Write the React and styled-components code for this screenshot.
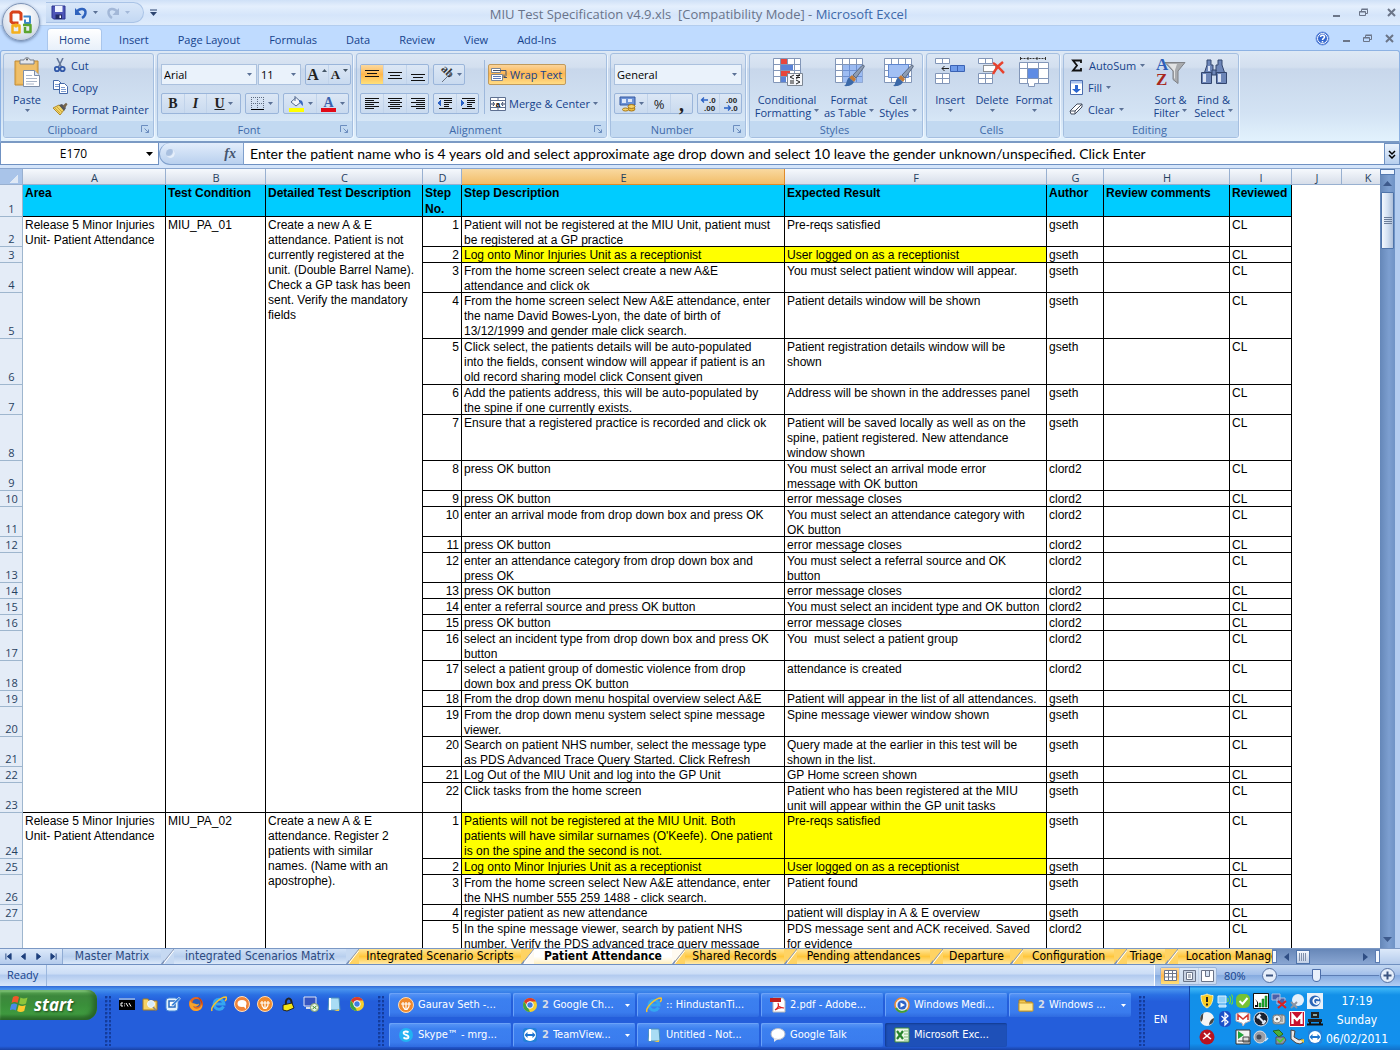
import React, {useState} from "react";
import styled, {createGlobalStyle} from "styled-components"

    const GlobalStyle = createGlobalStyle`
    * {
        box-sizing: border-box;
    }
    body {
        margin: 0;
        overflow: hidden;
        font-family: "Open Sans", "Noto Sans", sans-serif;
        font-size: 11px;
        color: #15428b;
    }
    button, input, select {
        font: inherit;
        color: inherit;
        margin: 0;
        padding: 0;
        border: none;
        background: none;
    }
    button {
        cursor: pointer;
    }
    svg {
        display: block;
        flex: none;
    }
    `
    const Desktop = styled.div`
    display: flex;
    flex-direction: column;
    height: 100vh;
    background: #bfdbff;
    `
    const TitleBar = styled.header`
    display: flex;
    position: relative;
    align-items: center;
    height: 26px;
    padding-left: 46px;
    background: linear-gradient(#cfe0f7, #e4effd 25%, #d5e5fa 60%, #dfecfc);
    border-bottom: 1px solid #b3cdee;
    `
    const OfficeButton = styled.button`
    position: absolute;
    left: 2px;
    top: 3px;
    z-index: 2;
    width: 38px;
    height: 38px;
    border-radius: 50%;
    display: flex;
    align-items: center;
    justify-content: center;
    background: radial-gradient(circle at 50% 35%, #ffffff 20%, #dde4ee 60%, #b4c2d6);
    border: 1px solid #7d93b5;
    box-shadow: 0 1px 3px #6c86ad;
    `
    const QuickAccess = styled.div`
    display: flex;
    align-items: center;
    height: 21px;
    width: 98px;
    padding-left: 5px;
    gap: 8px;
    border: 1px solid #a9c3e6;
    border-left: none;
    border-radius: 0 11px 11px 0;
    background: linear-gradient(#d9e7f9, #c3d8f3);
    `
    const IconButton = styled.button`
    display: flex;
    align-items: center;
    justify-content: center;
    gap: 5px;
    `
    const CustomizeButton = styled(IconButton)`
    margin-left: 6px;
    `
    const Title = styled.h1`
    flex: 1;
    margin: 0;
    padding: 2px 92px 0 0;
    text-align: center;
    font-size: 13px;
    font-weight: 400;
    line-height: 18px;
    white-space: pre;
    color: #69748a;
    span {
        color: #3e6aaa;
    }
    `
    const WindowButtons = styled.div`
    display: flex;
    align-items: center;
    align-self: center;
    gap: ${props => props.$gap}px;
    padding-right: ${props => props.$right}px;
    `
    const MenuTabs = styled.nav`
    display: flex;
    align-items: flex-end;
    gap: 7px;
    height: 24px;
    padding-left: 48px;
    background: #bfdbff;
    `
    const MenuTab = styled.button`
    height: 21px;
    padding: 0 11px;
    line-height: 20px;
    border-radius: 3px 3px 0 0;
    background: ${props => props.$active ? "linear-gradient(#ffffff, #e8f0fa)" : "none"};
    box-shadow: ${props => props.$active ? "0 0 0 1px #a9c6ec" : "none"};
    `
    const Spacer = styled.div`
    flex: 1;
    `
    const Ribbon = styled.section`
    position: relative;
    display: flex;
    gap: 3px;
    height: 93px;
    padding: 2px 2px 5px;
    border: 1px solid #8db2e3;
    border-bottom: 2px solid #7b9ac4;
    border-radius: 3px 3px 0 0;
    background: linear-gradient(#dde8f5, #d3dfef 18%, #c8d7eb 20%, #d3e3f4 70%, #e2f2fd);
    `
    const Group = styled.section`
    display: flex;
    flex-direction: column;
    width: ${props => props.$w}px;
    height: 85px;
    border: 1px solid #a5bfe0;
    border-radius: 3px;
    box-shadow: 1px 1px 0 #eef6ff;
    overflow: hidden;
    `
    const GroupBody = styled.div`
    display: flex;
    flex: 1;
    padding: 0 ${props => props.$pad || 1}px;
    `
    const GroupTitle = styled.div`
    display: flex;
    align-items: center;
    height: 16px;
    padding-right: 3px;
    background: #c2d9f1;
    color: #3e6aaa;
    h2 {
        flex: 1;
        margin: 0;
        text-align: center;
        font: inherit;
        line-height: 15px;
    }
    `
    const BigButton = styled.button`
    display: flex;
    flex-direction: column;
    align-items: center;
    justify-content: flex-start;
    width: ${props => props.$w}px;
    padding-top: 3px;
    line-height: 13px;
    white-space: nowrap;
    svg:first-child {
        margin-bottom: 4px;
    }
    `
    const LabelLine = styled.span`
    display: flex;
    align-items: center;
    gap: 3px;
    height: 13px;
    `
    const SmallColumn = styled.div`
    display: flex;
    flex-direction: column;
    padding-left: 4px;
    width: ${props => props.$w}px;
    `
    const SmallButton = styled.button`
    display: flex;
    align-items: center;
    gap: 4px;
    height: 22px;
    white-space: nowrap;
    `
    const ToolRows = styled.div`
    display: flex;
    flex-direction: column;
    align-items: flex-start;
    gap: 8px;
    padding-top: 10px;
    `
    const ToolRow = styled.div`
    display: flex;
    align-items: center;
    gap: ${props => props.$gap || 4}px;
    height: 21px;
    `
    const ButtonSet = styled.div`
    display: flex;
    height: 21px;
    border: 1px solid #9ab5da;
    border-radius: 2px;
    background: linear-gradient(#dce7f5, #c9daef);
    `
    const SizeButtons = styled(ButtonSet)`
    margin-left: 3px;
    `
    const SetButton = styled.button`
    display: flex;
    align-items: center;
    justify-content: center;
    gap: 3px;
    width: ${props => props.$w || 22}px;
    color: #222;
    font: ${props => props.$font || "inherit"};
    background: ${props => props.$on ? "linear-gradient(#fbd9a0, #ffb74c 50%, #ffe07a)" : "none"};
    & + & {
        border-left: 1px solid #c1d3ea;
    }
    `
    const ComboBox = styled.label`
    display: flex;
    align-items: center;
    width: ${props => props.$w}px;
    height: 21px;
    border: 1px solid #abc1de;
    background: #eaf2fb;
    padding-right: 4px;
    select {
        flex: 1;
        min-width: 0;
        appearance: none;
        padding-left: 2px;
        color: #000;
        outline: none;
    }
    `
    const Divider = styled.div`
    width: 1px;
    height: 54px;
    margin: 6px 3px 0 5px;
    background: #9db8dc;
    `
    const WrapButton = styled(SmallButton)`
    height: 21px;
    gap: 3px;
    padding: 0 3px 0 1px;
    border: 1px solid ${props => props.$on ? "#c09a5c" : "transparent"};
    border-radius: 2px;
    background: ${props => props.$on ? "linear-gradient(#fbd49a, #fdb653 45%, #ffdc85)" : "none"};
    `
    const FormulaBar = styled.div`
    display: flex;
    height: 25px;
    padding-bottom: 3px;
    background: #d5e5fa;
    color: #000;
    `
    const NameBox = styled.div`
    display: flex;
    align-items: center;
    width: 159px;
    background: #fff;
    border: 1px solid #6f91c2;
    border-top: none;
    font-size: 12px;
    input {
        width: 145px;
        padding-left: 0;
        text-align: center;
        outline: none;
    }
    `
    const FunctionArea = styled.div`
    display: flex;
    align-items: center;
    justify-content: space-between;
    width: 85px;
    padding: 0 7px 0 6px;
    border: 1px solid #7f9fcc;
    border-width: 0 1px 1px;
    border-radius: 11px 0 0 11px;
    background: linear-gradient(#e2edfb, #b9d0ee);
    `
    const FunctionButton = styled.button`
    font: italic bold 14px "Liberation Serif", serif;
    color: #44546e;
    `
    const Knob = styled.span`
    width: 9px;
    height: 9px;
    border-radius: 50%;
    background: #a9c0e0;
    box-shadow: inset -2px -2px 1px #e6effb;
    `
    const FormulaInput = styled.input`
    flex: 1;
    min-width: 0;
    padding-left: 6px;
    background: #fff;
    border-bottom: 1px solid #6f91c2;
    outline: none;
    font: 14px Lato, sans-serif;
    `
    const ExpandButton = styled(IconButton)`
    width: 16px;
    border: 1px solid #6f91c2;
    background: linear-gradient(#eaf2fc, #b7cfee);
    `
    const SheetArea = styled.main`
    display: flex;
    flex: 1;
    min-height: 0;
    border-top: 1px solid #8ba7cf;
    background: #fff;
    `
    const GridWindow = styled.div`
    flex: 1;
    min-width: 0;
    overflow: hidden;
    `
    const Grid = styled.table`
    width: 100%;
    table-layout: fixed;
    border-collapse: separate;
    border-spacing: 0;
    font: 12px/15px "Liberation Sans", Arial, sans-serif;
    color: #000;
    `
    const ColumnHead = styled.th`
    height: 16px;
    padding: 0;
    font: 11px/15px "Open Sans", sans-serif;
    color: #27415f;
    background: ${props => props.$on ? "linear-gradient(#f9d9a0, #f1bb64)" : "linear-gradient(#f6f9fd, #d5dce8)"};
    box-shadow: inset -1px -1px 0 ${props => props.$on ? "#e08a2a" : "#98b0d0"};
    `
    const Corner = styled(ColumnHead)`
    background: linear-gradient(135deg, transparent 60%, #dfe9f6 60%) 6px 4px / 12px 10px no-repeat #a9c4e9;
    `
    const GridRow = styled.tr`
    height: ${props => props.$h}px;
    `
    const RowHead = styled.th`
    padding: 0;
    vertical-align: bottom;
    font: 11px/16px "Open Sans", sans-serif;
    color: #27415f;
    background: #e4ecf7;
    box-shadow: inset -1px -1px 0 #9eb6ce;
    `
    const Cell = styled.td`
    padding: 1px ${props => props.$right ? 3 : 1}px 0 2px;
    vertical-align: top;
    white-space: pre;
    overflow: hidden;
    text-align: ${props => props.$right ? "right" : "left"};
    background: ${props => props.$yellow ? "#ffff00" : "#ffffff"};
    box-shadow: inset -1px -1px 0 #000;
    &::after {
        content: "";
        display: block;
        margin-bottom: -1px;
    }
    `
    const TitleCell = styled.th`
    padding: 0 0 0 2px;
    vertical-align: top;
    text-align: left;
    line-height: 16px;
    white-space: pre;
    background: #00ccff;
    box-shadow: inset -1px -1px 0 #000;
    `
    const EmptyCell = styled.td`
    padding: 0;
    `
    const VerticalScroll = styled.div`
    display: flex;
    flex-direction: column;
    align-items: center;
    width: 15px;
    margin-right: 5px;
    background: linear-gradient(90deg, #6587b8, #7d9fd0 60%, #6f93c6);
    box-shadow: 5px 0 0 #b4cdf0;
    `
    const SplitBox = styled.div`
    width: 15px;
    height: 6px;
    border: 1px solid #5479b0;
    background: #eef5ff;
    `
    const ScrollButton = styled(IconButton)`
    width: 15px;
    height: 17px;
    `
    const VerticalThumb = styled(IconButton)`
    width: 13px;
    height: 57px;
    border: 1px solid #4f74aa;
    border-radius: 1px;
    background: linear-gradient(90deg, #f4f8fe, #d4e1f2 50%, #aebfd9);
    `
    const SheetTabs = styled.div`
    display: flex;
    height: 17px;
    background: linear-gradient(#dce9fa, #b4cbec);
    border-top: 1px solid #7b98c4;
    border-bottom: 1px solid #6f8fc0;
    font: 12px/15px "DejaVu Sans Condensed", "DejaVu Sans", sans-serif;
    color: #000;
    `
    const TabArrows = styled.div`
    display: flex;
    align-items: center;
    gap: 8px;
    width: 63px;
    padding-left: 5px;
    border-right: 1px solid #8fabd3;
    `
    const TabList = styled.div`
    display: flex;
    flex: 1;
    min-width: 0;
    overflow: hidden;
    `
    const SheetTab = styled.button`
    flex: none;
    width: ${props => props.$w}px;
    white-space: nowrap;
    font-weight: ${props => props.$kind === "active" ? 700 : 400};
    color: ${props => props.$kind === "plain" ? "#2c4a80" : "#000"};
    background: ${props => props.$kind === "active" ? "linear-gradient(#ffffff 50%, #fff0c0)"
        : props.$kind === "plain" ? "linear-gradient(#d2e2f7, #b8cfee 50%, #dbe8f9)"
        : "linear-gradient(#ffe69a, #ffc73c 50%, #ffe9a8)"};
    `
    const SideScroll = styled.div`
    display: flex;
    align-items: center;
    width: 108px;
    margin-right: 20px;
    background: linear-gradient(#6787b8, #89a6d2);
    `
    const SplitHandle = styled.span`
    width: 5px;
    height: 13px;
    border: 1px solid #5c7db2;
    background: #f5f9ff;
    `
    const SideButton = styled(IconButton)`
    width: 19px;
    `
    const SideThumb = styled(IconButton)`
    width: 14px;
    height: 14px;
    border: 1px solid #4f74aa;
    background: linear-gradient(#f4f8fe, #c2d0e6);
    `
    const StatusBar = styled.footer`
    display: flex;
    height: 21px;
    align-items: stretch;
    background: linear-gradient(#dce9fa, #cddef6 40%, #b3cbef 50%, #d9e7fa);
    line-height: 20px;
    `
    const StatusText = styled.div`
    width: 47px;
    padding-left: 7px;
    border-right: 1px solid #9bb7de;
    `
    const StatusTools = styled.div`
    display: flex;
    align-items: center;
    width: 246px;
    padding: 0 4px 0 5px;
    gap: 7px;
    border-left: 1px solid #fff;
    background: linear-gradient(#c3d7f1, #a3c0ea 45%, #86abe0 50%, #b2cef3);
    `
    const ViewButtons = styled(ButtonSet)`
    height: 18px;
    `
    const ZoomControl = styled.label`
    display: flex;
    align-items: center;
    input {
        width: 101px;
        height: 16px;
        appearance: none;
        background: linear-gradient(#5c7db4, #5c7db4) center / 100% 1px no-repeat;
    }
    input::-webkit-slider-thumb {
        appearance: none;
        width: 9px;
        height: 13px;
        border: 1px solid #4b6da8;
        border-radius: 1px 1px 5px 5px;
        background: #e8f0fb;
    }
    `
    const TaskBar = styled.footer`
    display: flex;
    height: 64px;
    background: linear-gradient(#3168d5, #4893ee 5%, #2a6fe3 14%, #245edb 24%, #245edb 94%, #1941a5);
    color: #fff;
    font: 11px/14px "DejaVu Sans Condensed", "DejaVu Sans", sans-serif;
    `
    const StartButton = styled.button`
    display: flex;
    align-items: center;
    gap: 4px;
    width: 97px;
    height: 30px;
    margin-top: 4px;
    padding: 0 0 2px 10px;
    border-radius: 0 9px 12px 0;
    background: linear-gradient(#5eac56, #3c873c 20%, #3a8f3a 50%, #3f9a3f 80%, #2d6f2d);
    box-shadow: inset -4px -2px 5px #276327, inset 0 2px 2px #86c97d;
    font: italic bold 17px "Open Sans", sans-serif;
    text-shadow: 1px 1px 2px #1c4a1c;
    `
    const Grip = styled.div`
    width: 6px;
    height: 50px;
    margin: 10px ${props => props.$right}px 0 ${props => props.$left}px;
    background: radial-gradient(circle at 1px 1px, #143c9c 1px, transparent 2px) 0 0 / 4px 4px;
    `
    const QuickLaunch = styled.div`
    display: flex;
    align-items: flex-start;
    gap: 7px;
    width: 260px;
    padding: 10px 0 0 7px;
    `
    const TaskGrid = styled.div`
    display: grid;
    flex: 1;
    grid-template-columns: repeat(6, 1fr);
    grid-auto-rows: 24px;
    gap: 6px 2px;
    padding-top: 7px;
    `
    const TaskButton = styled.button`
    display: flex;
    align-items: center;
    gap: 4px;
    min-width: 0;
    padding: 0 5px 0 9px;
    border-radius: 2px;
    white-space: nowrap;
    text-align: left;
    background: ${props => props.$on ? "#1e50b8" : "linear-gradient(#5a97f6, #3c80f0 25%, #3a7cee 80%, #2f6be0)"};
    box-shadow: ${props => props.$on ? "inset 1px 1px 2px #123a8f" : "inset 1px 1px 0 #6ba2f8"};
    b {
        color: #d8dde6;
    }
    `
    const TaskName = styled.span`
    flex: 1;
    overflow: hidden;
    `
    const Language = styled.button`
    width: 15px;
    margin: 4px 21px 0 8px;
    `
    const Tray = styled.div`
    display: flex;
    width: 211px;
    padding-left: 8px;
    border-left: 1px solid #1248a8;
    background: linear-gradient(#1070d0, #3bb4f6 4%, #1290e8 14%, #1290ee 90%, #1270c8);
    `
    const TrayIcons = styled.div`
    display: grid;
    grid-template-columns: repeat(7, 18px);
    grid-auto-rows: 18px;
    padding-top: 6px;
    justify-items: center;
    align-items: center;
    `
    const Clock = styled.time`
    flex: 1;
    padding: 6px 10px 0 0;
    text-align: center;
    font-size: 12px;
    line-height: 19px;
    white-space: pre;
    `

    const columns = [
        {name: "A", width: 143}, {name: "B", width: 100}, {name: "C", width: 157},
        {name: "D", width: 39}, {name: "E", width: 323}, {name: "F", width: 262},
        {name: "G", width: 57}, {name: "H", width: 126}, {name: "I", width: 62},
        {name: "J", width: 50}, {name: "K", width: 52}
    ]
    const titles = ["Area", "Test Condition", "Detailed Test Description", "Step\nNo.", "Step Description",
        "Expected Result", "Author", "Review comments", "Reviewed"]
    const tests = [
        {
            area: "Release 5 Minor Injuries\nUnit- Patient Attendance",
            condition: "MIU_PA_01",
            detail: "Create a new A & E\nattendance. Patient is not\ncurrently registered at the\nunit. (Double Barrel Name).\nCheck a GP task has been\nsent. Verify the mandatory\nfields",
            steps: [
                {h: 30, step: "Patient will not be registered at the MIU Unit, patient must\nbe registered at a GP practice", result: "Pre-reqs satisfied", author: "gseth"},
                {h: 16, step: "Log onto Minor Injuries Unit as a receptionist", result: "User logged on as a receptionist", author: "gseth", yellow: true},
                {h: 30, step: "From the home screen select create a new A&E\nattendance and click ok", result: "You must select patient window will appear.", author: "gseth"},
                {h: 46, step: "From the home screen select New A&E attendance, enter\nthe name David Bowes-Lyon, the date of birth of\n13/12/1999 and gender male click search.", result: "Patient details window will be shown", author: "gseth"},
                {h: 46, step: "Click select, the patients details will be auto-populated\ninto the fields, consent window will appear if patient is an\nold record sharing model click Consent given", result: "Patient registration details window will be\nshown", author: "gseth"},
                {h: 30, step: "Add the patients address, this will be auto-populated by\nthe spine if one currently exists.", result: "Address will be shown in the addresses panel", author: "gseth"},
                {h: 46, step: "Ensure that a registered practice is recorded and click ok", result: "Patient will be saved locally as well as on the\nspine, patient registered. New attendance\nwindow shown", author: "gseth"},
                {h: 30, step: "press OK button", result: "You must select an arrival mode error\nmessage with OK button", author: "clord2"},
                {h: 16, step: "press OK button", result: "error message closes", author: "clord2"},
                {h: 30, step: "enter an arrival mode from drop down box and press OK", result: "You must select an attendance category with\nOK button", author: "clord2"},
                {h: 16, step: "press OK button", result: "error message closes", author: "clord2"},
                {h: 30, step: "enter an attendance category from drop down box and\npress OK", result: "You must select a referral source and OK\nbutton", author: "clord2"},
                {h: 16, step: "press OK button", result: "error message closes", author: "clord2"},
                {h: 16, step: "enter a referral source and press OK button", result: "You must select an incident type and OK button", author: "clord2"},
                {h: 16, step: "press OK button", result: "error message closes", author: "clord2"},
                {h: 30, step: "select an incident type from drop down box and press OK\nbutton", result: "You  must select a patient group", author: "clord2"},
                {h: 30, step: "select a patient group of domestic violence from drop\ndown box and press OK button", result: "attendance is created", author: "clord2"},
                {h: 16, step: "From the drop down menu hospital overview select A&E", result: "Patient will appear in the list of all attendances.", author: "gseth"},
                {h: 30, step: "From the drop down menu system select spine message\nviewer.", result: "Spine message viewer window shown", author: "gseth"},
                {h: 30, step: "Search on patient NHS number, select the message type\nas PDS Advanced Trace Query Started. Click Refresh", result: "Query made at the earlier in this test will be\nshown in the list.", author: "gseth"},
                {h: 16, step: "Log Out of the MIU Unit and log into the GP Unit", result: "GP Home screen shown", author: "gseth"},
                {h: 30, step: "Click tasks from the home screen", result: "Patient who has been registered at the MIU\nunit will appear within the GP unit tasks", author: "gseth"}
            ]
        },
        {
            area: "Release 5 Minor Injuries\nUnit- Patient Attendance",
            condition: "MIU_PA_02",
            detail: "Create a new A & E\nattendance. Register 2\npatients with similar\nnames. (Name with an\napostrophe).",
            steps: [
                {h: 46, step: "Patients will not be registered at the MIU Unit. Both\npatients will have similar surnames (O'Keefe). One patient\nis on the spine and the second is not.", result: "Pre-reqs satisfied", author: "gseth", yellow: true},
                {h: 16, step: "Log onto Minor Injuries Unit as a receptionist", result: "User logged on as a receptionist", author: "gseth", yellow: true},
                {h: 30, step: "From the home screen select New A&E attendance, enter\nthe NHS number 555 259 1488 - click search.", result: "Patient found", author: "gseth"},
                {h: 16, step: "register patient as new attendance", result: "patient will display in A & E overview", author: "gseth"},
                {h: 46, step: "In the spine message viewer, search by patient NHS\nnumber. Verify the PDS advanced trace query message", result: "PDS message sent and ACK received. Saved\nfor evidence", author: "clord2"}
            ]
        }
    ]
    const sheets = [
        {name: "Master Matrix", width: 98, kind: "plain"},
        {name: "integrated Scenarios Matrix", width: 172, kind: "plain"},
        {name: "Integrated Scenario Scripts", width: 162},
        {name: "Patient Attendance", width: 138},
        {name: "Shared Records", width: 99},
        {name: "Pending attendances", width: 133},
        {name: "Departure", width: 67},
        {name: "Configuration", width: 91},
        {name: "Triage", width: 38},
        {name: "Location Manager", width: 112}
    ]

    const Arrow = ({color = "#5b7196"}) => (
        <svg width="5" height="3" viewBox="0 0 5 3"><path d="M0 0h5L2.500 3z" fill={color}/></svg>
    )
    const Lines = ({rows, size = 16}) => (
        <svg width={size} height="14" viewBox="0 0 16 14" stroke="#111" shapeRendering="crispEdges">
            {rows.map(([x, y, w]) => <path key={y} d={`M${x} ${y}.5h${w}`}/>)}
        </svg>
    )
    const Launcher = () => (
        <svg width="9" height="9" viewBox="0 0 9 9" fill="none" stroke="#6b8dbf">
            <path d="M.5 7V.5H7"/><path d="M3.500 3.500l4 4M7.500 4.500v3h-3"/>
        </svg>
    )
    const Minimize = () => <svg width="9" height="10" viewBox="0 0 9 10"><path d="M1 8h7" stroke="#6b7588" strokeWidth="2"/></svg>
    const Restore = () => (
        <svg width="10" height="9" viewBox="0 0 10 9" fill="none" stroke="#6b7588">
            <path d="M.5 3.500h6v4h-6zM2.500 3V1.500h6v4H7M.5 4h6M2.500 1h6.500"/>
        </svg>
    )
    const Close = () => <svg width="9" height="9" viewBox="0 0 9 9"><path d="M1 1l7 7M8 1L1 8" stroke="#6b7588" strokeWidth="2"/></svg>
    const OfficeLogo = () => (
        <svg width="26" height="26" viewBox="0 0 26 26" fill="none" strokeLinejoin="round">
            <path d="M13 11.500V4.500L11 3H4.500L3 4.500v8L4.500 14h6" stroke="#d8431b" strokeWidth="3"/>
            <path d="M15.500 7.500h6.500v6.500h-5v-3.500" stroke="#3d86c9" strokeWidth="2"/>
            <path d="M4.500 16.500h7v7h-7zM8 14.500v4" stroke="#f4b01c" strokeWidth="2.500"/>
            <path d="M15 16h7.500v7H17v-5" stroke="#5ba52e" strokeWidth="2.500"/>
        </svg>
    )
    const Save = () => (
        <svg width="15" height="15" viewBox="0 0 15 15">
            <path d="M1 1h13v13H2.500L1 12.500z" fill="#4e55b8" stroke="#2c3590"/>
            <path d="M4 1h7.500v6H4z" fill="#eef2ff"/><path d="M4.500 9.500h6.500V14H4.500z" fill="#232b66"/><path d="M8.500 10.500h1.500V13H8.500z" fill="#fff"/>
        </svg>
    )
    const Undo = ({color = "#2f62bd", flip}) => (
        <svg width="14" height="14" viewBox="0 0 14 14">
            <g transform={flip ? "matrix(-1 0 0 1 14 0)" : undefined}>
                <path d="M2 6.500C6 1 12 2.500 11.500 7c-.3 2.500-1.800 4-3.500 5" fill="none" stroke={color} strokeWidth="2.400"/>
                <path d="M1 2v7h6.500z" fill={color}/>
            </g>
        </svg>
    )
    const PasteIcon = () => (
        <svg width="28" height="32" viewBox="0 0 28 32">
            <path d="M2 4h23v24H2z" fill="#edb95c" stroke="#c08a35"/><path d="M4 6h19v20H4z" fill="#efbf6a"/>
            <path d="M7 3h4c.5-3 5.500-3 6 0h4v4H7z" fill="#e4e6ea" stroke="#777f8c"/><circle cx="14" cy="2.500" r="1" fill="#555"/>
            <path d="M10.500 13.500h11l5 5v11h-16z" fill="#fff" stroke="#7d8ea8"/><path d="M21.500 13.500v5h5" fill="#dfe6f0" stroke="#7d8ea8"/>
            <path d="M13 18.500h6M13 21.500h11M13 24.500h11M13 27h8" stroke="#a9b5c8"/>
        </svg>
    )
    const CutIcon = () => (
        <svg width="14" height="15" viewBox="0 0 14 15" fill="none">
            <path d="M4 0l4.500 9M10 0L5.500 9" stroke="#66789a" strokeWidth="1.600"/>
            <circle cx="4" cy="11" r="2.200" stroke="#3258a8" strokeWidth="1.800"/><circle cx="9.500" cy="11" r="2.200" stroke="#3258a8" strokeWidth="1.800"/>
        </svg>
    )
    const CopyIcon = () => (
        <svg width="15" height="14" viewBox="0 0 15 14" fill="#fff" stroke="#4569a8">
            <path d="M.5.5h5l3 3v6h-8z"/><path d="M2 4.500h4M2 6.500h4" stroke="#7d9bd0"/>
            <path d="M6.500 3.500h5l3 3v7h-8z"/><path d="M8 7.500h4M8 9.500h5M8 11.500h5" stroke="#7d9bd0"/>
        </svg>
    )
    const PainterIcon = () => (
        <svg width="15" height="14" viewBox="0 0 15 14">
            <path d="M0 6l6-3 5 5-4 5z" fill="#f0d466" stroke="#b18a2c"/><path d="M2 6l5 5M4 5l5 5" stroke="#cda53c"/>
            <path d="M6 3l3-1 4 4-2 3z" fill="#54565c"/><path d="M9.500 4L13 .8l1.500 1.500L12 6z" fill="#77664c"/>
        </svg>
    )
    const BorderIcon = () => (
        <svg width="14" height="14" viewBox="0 0 14 14" fill="none" stroke="#5d6b80" strokeDasharray="1 1" shapeRendering="crispEdges">
            <path d="M.5 0v12M6.500 0v12M12.500 0v12M0 .5h13M0 6.500h13"/><path d="M0 12.500h13" stroke="#000" strokeDasharray="none"/>
        </svg>
    )
    const FillColor = () => (
        <svg width="17" height="16" viewBox="0 0 17 16">
            <path d="M3 6l5-4.500L13 6 8 10z" fill="#f2f5fa" stroke="#556a91"/><path d="M7 0v5" stroke="#556a91"/><path d="M11 4c4 0 4 3 4 6-2-1-2-3-4-4z" fill="#3a68be"/>
            <path d="M1 12h15v4H1z" fill="#ffff00"/>
        </svg>
    )
    const FontColor = () => (
        <svg width="17" height="16" viewBox="0 0 17 16">
            <text x="8.500" y="11" textAnchor="middle" fontFamily="Liberation Serif, serif" fontWeight="700" fontSize="14" fill="#3b62ad">A</text>
            <path d="M1 12h15v4H1z" fill="#e20a17"/>
        </svg>
    )
    const OrientIcon = () => (
        <svg width="17" height="17" viewBox="0 0 17 17">
            <text x="8" y="8" textAnchor="middle" transform="rotate(45 8 8)" fontFamily="Liberation Serif, serif" fontWeight="700" fontSize="12" fill="#333">ab</text>
            <path d="M5 16l9-9M10.500 7H14v3.500" fill="none" stroke="#6a7280"/>
        </svg>
    )
    const Indent = ({out}) => (
        <svg width="16" height="14" viewBox="0 0 16 14" shapeRendering="crispEdges">
            <path d="M2 1.500h13M7 3.500h8M7 5.500h8M7 7.500h5M7 9.500h5M2 11.500h13" stroke="#111"/>
            <path d={out ? "M0 6l4-3v6z" : "M5 6L1 3v6z"} fill="#2b61c4"/>
        </svg>
    )
    const WrapIcon = () => (
        <svg width="17" height="16" viewBox="0 0 17 16" fill="#fff" stroke="#7b8494">
            <path d="M1.500 1.500h9v4h-9zM1.500 7.500h11v6h-11z"/><path d="M3 3.500h13v5l-2 2M14 7.500v3h3" fill="none" stroke="#44506a"/><path d="M3 9.500h8M3 11.500h8" stroke="#5a78b8"/>
        </svg>
    )
    const MergeIcon = () => (
        <svg width="16" height="14" viewBox="0 0 16 14">
            <path d="M.5.5h15v13H.5zM.5 3.500h15M.5 10.500h15M8 .5v3M8 10.500v3" fill="#fff" stroke="#5d6f90"/>
            <text x="8" y="9.500" textAnchor="middle" fontFamily="Liberation Sans, sans-serif" fontWeight="700" fontSize="8">a</text>
            <path d="M1 7h3M12 7h3M3 5l1.500 2L3 9M13 5l-1.500 2L13 9" fill="none" stroke="#2c3c60"/>
        </svg>
    )
    const MoneyIcon = () => (
        <svg width="17" height="16" viewBox="0 0 17 16">
            <path d="M1 1h15v8H1z" fill="#6e93d6" stroke="#3558a0"/><path d="M3 3h4v4H3zM9 3h4v3H9z" fill="#dfe9fb"/>
            <ellipse cx="12.500" cy="13" rx="3.500" ry="2" fill="#eebc3c" stroke="#a8781a"/><ellipse cx="12.500" cy="10.500" rx="3.500" ry="2" fill="#f7d266" stroke="#a8781a"/><ellipse cx="6.500" cy="13.500" rx="3" ry="1.500" fill="#f7d266" stroke="#a8781a"/>
        </svg>
    )
    const Decimals = ({more}) => (
        <svg width="18" height="16" viewBox="0 0 18 16" fontFamily="Liberation Sans, sans-serif" fontWeight="700" fontSize="8" fill="#222">
            <text x={more ? 9 : 4} y="7">{more ? ".0" : ".00"}</text><text x={more ? 4 : 9} y="15">{more ? ".00" : ".0"}</text>
            <path d={more ? "M2 4h6M4 1.500L1.500 4 4 6.500" : "M2 12h6M6 9.500L8.500 12 6 14.500"} fill="none" stroke="#2b61c4" strokeWidth="1.300"/>
        </svg>
    )
    const GridBase = ({fill = "#fff"}) => (
        <path d="M2.500 1.500h27v24h-27zM2.500 7.500h27M2.500 13.500h27M2.500 19.500h27M9.500 1.500v24M16.500 1.500v24M23.500 1.500v24" fill={fill} stroke="#8296b8"/>
    )
    const ConditionalIcon = () => (
        <svg width="32" height="32" viewBox="0 0 32 32">
            <GridBase/>
            <path d="M10 2h6v5h-6zM10 14h9v5h-9z" fill="#e8463c"/><path d="M10 8h12v5H10zM10 20h5v5h-5z" fill="#5b83d6"/>
            <path d="M16.500 16.500h15v12h-15z" fill="#f4f6fa" stroke="#7d8794"/>
            <path d="M23 18l-4 2 4 2M19 24h4M19 26h4M25 18.500h4M25 20.500h4M28.500 17l-3 5M25 23l4 2-4 2" fill="none" stroke="#222"/>
        </svg>
    )
    const Brush = () => (
        <g>
            <path d="M20 18L29 8.500c1-1 3 0 2 1.500l-8 11z" fill="#8d9cb4" stroke="#5c6a80"/>
            <path d="M19 18l4 4-2 3-5-4z" fill="#c57c38"/>
            <path d="M16 20.500l5 4.500c-2 4-7 4.500-10 4 3-1.500 2-6 5-8.500z" fill="#3c69a8"/>
        </g>
    )
    const TableIcon = () => (
        <svg width="32" height="32" viewBox="0 0 32 32"><GridBase/><path d="M10 8h19.500v17.500H10z" fill="#9dbcf2"/><path d="M10 13.500h19M10 19.500h19M16.500 8v17M23.500 8v17" stroke="#6d90d2"/><Brush/></svg>
    )
    const StylesIcon = () => (
        <svg width="32" height="32" viewBox="0 0 32 32"><GridBase/><path d="M6.500 7.500h20v13h-20z" fill="#a2c0f4" stroke="#5f86cf"/><Brush/></svg>
    )
    const InsertIcon = () => (
        <svg width="32" height="32" viewBox="0 0 32 32" fill="#fff" stroke="#8296b8">
            <path d="M1.500 1.500h14v5h-14zM8.500 1.500v5M1.500 16.500h14v10h-14zM8.500 16.500v10M1.500 21.500h14"/>
            <path d="M16.500 8.500h14v6h-14zM23.500 8.500v6" fill="#6f9bea" stroke="#3a62b4"/><path d="M15 11.500H8M10.500 9L8 11.500l2.500 2.500" fill="none" stroke="#222"/>
        </svg>
    )
    const DeleteIcon = () => (
        <svg width="32" height="32" viewBox="0 0 32 32" fill="#fff" stroke="#8296b8">
            <path d="M2.500 1.500h14v5h-14zM9.500 1.500v5M2.500 16.500h14v10h-14zM9.500 16.500v10M2.500 21.500h14"/>
            <path d="M7.500 8.500h12v6h-12z" strokeDasharray="1 1" stroke="#333"/><path d="M17 6c4 2 8 7 11 10M27 5c-4 3-8 8-10 12" fill="none" stroke="#e8422e" strokeWidth="2.500"/>
        </svg>
    )
    const FormatIcon = () => (
        <svg width="32" height="32" viewBox="0 0 32 32">
            <path d="M1.500 5.500h29v21h-14v3h-6v-3h-9zM1.500 11.500h29M1.500 21.500h29M9.500 5.500v21M20.500 5.500v21" fill="#fff" stroke="#8296b8"/>
            <path d="M10 12h10v9H10z" fill="#5f8ce4"/><path d="M2.500 1.500h25" stroke="#333" strokeDasharray="2 1"/><path d="M2.500 0v3M27.500 0v3M10 0v3M19 0v3" stroke="#333"/>
        </svg>
    )
    const SumIcon = () => (
        <svg width="16" height="13" viewBox="-1 0 16 13"><path d="M11 4V1.500H3L7 6.500l-4 5h8V9" fill="none" stroke="#111" strokeWidth="1.800"/></svg>
    )
    const FillIcon = () => (
        <svg width="15" height="15" viewBox="-1 0 15 15"><path d="M.5.5h12v14H.5z" fill="#fff" stroke="#4a6cae"/><path d="M1 1h11v2.500H1z" fill="#a9c2ee"/><path d="M5 5h3v4h3l-4.500 4L2 9h3z" fill="#2c66d0"/></svg>
    )
    const EraserIcon = () => (
        <svg width="15" height="12" viewBox="0 0 15 12"><path d="M1 8l7-7h5v3l-7 7H2z" fill="#fff" stroke="#444e60"/><path d="M1 8h5l7-7M6 8v3" fill="none" stroke="#444e60"/></svg>
    )
    const SortIcon = () => (
        <svg width="32" height="32" viewBox="0 0 32 32" fontFamily="Liberation Serif, serif" fontWeight="700" fontSize="17">
            <path d="M10 5.500h20l-7 8.500v12.500l-5-4V14z" fill="#a9abae" stroke="#7f8186"/><path d="M13 7h9l-2 6v9l-1-1v-7z" fill="#e2e3e4"/>
            <text x="1" y="13" fill="#2f5eb8">A</text><text x="1" y="28" fill="#a8281e">Z</text>
        </svg>
    )
    const FindIcon = () => (
        <svg width="32" height="32" viewBox="0 0 32 32" fill="#6d86b8" stroke="#33466f">
            <path d="M9 3h4v5h2v6h3V8h2V3h4v5l3 9H6l3-9z"/><path d="M3.500 15.500h10v11h-10zM18.500 15.500h10v11h-10z"/>
            <path d="M5 17h3v8H5zM20 17h3v8h-3zM10 9h2v5h-2z" fill="#d8e2f4" stroke="none"/><path d="M14 13h4v5h-4z"/>
        </svg>
    )
    const Help = () => (
        <svg width="15" height="15" viewBox="0 0 15 15"><circle cx="7.500" cy="7.500" r="6.500" fill="#3568cf" stroke="#6e93dd"/><circle cx="7.500" cy="7.500" r="5" fill="none" stroke="#fff"/><path d="M5.500 6c.2-2.500 4-2.300 4 0 0 1.300-2 1.300-2 3M7.500 10v1.500" fill="none" stroke="#fff" strokeWidth="1.500"/></svg>
    )

    // 16px program icons of the task bar
    const small = {
        cmd: <g><path d="M0 3h16v11H0z"/><path d="M0 2h16v2H0z" fill="#7fa3e0"/><path d="M4 7H2v3h2M5.500 7.500v.8M5.500 9.500v.8M7 7l2 3.500M10 7l2 3.500" fill="none" stroke="#fff"/></g>,
        folder: <g><path d="M1 3h5l1 2h8v9H1z" fill="#f6d266" stroke="#a97c1e"/><circle cx="9" cy="8" r="3.500" fill="#d6ecfa" stroke="#f6f6f6"/><path d="M11 11l3 3" stroke="#888" strokeWidth="1.500"/></g>,
        folders: <g><path d="M1 3h6l1 2h6v9H1z" fill="#f2c84e" stroke="#a97c1e"/><path d="M1 6h14v8H1z" fill="#ffe790" stroke="#c89b31"/></g>,
        desktop: <g><rect x="1" y="2" width="12" height="13" rx="3" fill="#e6f2fc" stroke="#4a8ad8"/><path d="M4 5h6v6H4z" fill="#fff" stroke="#2a6cc0" strokeWidth="1.500"/><path d="M6 9l8-8 1.500 2L8 10z" fill="#3c84da" stroke="#fff" strokeWidth=".5"/></g>,
        firefox: <g><circle cx="8" cy="8" r="7" fill="#e8661b"/><circle cx="8.500" cy="7" r="4" fill="#2b5db8"/><path d="M2 4c1 4 4 3 6 4s3-1 3 0-2 4-6 2c1 4 7 4 9-2 1 5-3 7-6 7C3 15 0 10 2 4z" fill="#f8a42a"/><path d="M10 1c4 2 5 6 4 9 0-4-2-5-4-9z" fill="#c33a10"/></g>,
        ie: <g><path d="M12.500 10.500A5 5 0 1 1 13 8H4" fill="none" stroke="#35a6f0" strokeWidth="3"/><path d="M1 15C-1 11 9 1 15 1c1 1 0 3-1 4" fill="none" stroke="#f6c22d" strokeWidth="1.500"/></g>,
        orangeChat: <g><circle cx="8" cy="8" r="7.500" fill="#f0843a" stroke="#ffe0c0"/><ellipse cx="8" cy="7.500" rx="4.500" ry="3.500" fill="#fff"/><path d="M9 10l3 3V9z" fill="#fff"/></g>,
        orange: <g><circle cx="8" cy="8" r="7.500" fill="#f08a2c" stroke="#ffdcb4"/><path d="M5 5v4c0 2 2 2 2 4M11 5v4c0 2-2 2-2 4M8 5v8M3 7h10" fill="none" stroke="#fff" strokeWidth="1.200"/></g>,
        lock: <g><path d="M6 8c-1-5 3-7 5-4l1 4" fill="none" stroke="#222" strokeWidth="2"/><path d="M3 9l9-2 2 5-7 3-4-1z" fill="#f5e616" stroke="#222"/></g>,
        network: <g><path d="M1 1h12v9H1z" fill="#3655c0" stroke="#e0e6f4"/><path d="M3 11h7v2H3z" fill="#d7dce8"/><circle cx="11.500" cy="11.500" r="4" fill="#e8f4e0" stroke="#7c9a6a"/><path d="M9.500 10l2 1.500-2 1.500M13.500 10l-2 1.500 2 1.500" fill="none" stroke="#3d8a2c"/></g>,
        note: <g><path d="M3 2h10l1 12H2z" fill="#a9dcf4" stroke="#4d8fb8"/><path d="M4 2v12" stroke="#ffffff" strokeWidth="2"/><path d="M13 13l-5 2 5 0z" fill="#e8c84c"/></g>,
        chrome: <g><circle cx="8" cy="8" r="7" fill="#f6cf2c"/><path d="M8 1a7 7 0 0 1 6 3.500H8L5 8 2 4.500A7 7 0 0 1 8 1z" fill="#dc3a2c"/><path d="M2 4.500L6 11l2 4A7 7 0 0 1 2 4.500z" fill="#3da346"/><circle cx="8" cy="8" r="3.300" fill="#3f7de0" stroke="#fff"/></g>,
        pdf: <g><path d="M3 1h10l2 3v11H3z" fill="#fff" stroke="#b9b9b9"/><path d="M0 1h11v4H0z" fill="#c01e1e"/><path d="M5 13c3-2 4-5 3-7 0 4 4 5 6 5-3-1-6 0-9 2z" fill="none" stroke="#d22" strokeWidth="1.200"/></g>,
        media: <g><circle cx="8" cy="8" r="7" fill="#e8eef8" stroke="#f08a2c" strokeWidth="1.500"/><path d="M2 11a7 7 0 0 0 11 2" fill="none" stroke="#3ba03b" strokeWidth="2"/><circle cx="8" cy="8" r="4.500" fill="#2c62c8"/><path d="M6.500 5.500L11 8l-4.500 2.500z" fill="#fff"/></g>,
        skype: <g><circle cx="8" cy="8" r="7" fill="#22b2f2"/><path d="M10.500 5.500C9 4 5.500 4.200 5.500 6c0 2.300 5 1.400 5 4 0 1.900-3.500 2-5 .3" fill="none" stroke="#fff" strokeWidth="1.800"/></g>,
        team: <g><rect x="1" y="1" width="14" height="14" rx="3" fill="#2380d8"/><circle cx="8" cy="8" r="6" fill="#fff"/><path d="M2.500 8l3-3v2h5V5l3 3-3 3V9h-5v2z" fill="#1d74ce"/></g>,
        talk: <g><ellipse cx="8" cy="7" rx="7" ry="5.500" fill="#fff" stroke="#b8bcc8"/><path d="M4 11v4l4-3z" fill="#e6e8ee"/></g>,
        excel: <g><path d="M1 1h14v14H1z" fill="#eaf6e6" stroke="#3d8a3a"/><path d="M10 4h4M10 7h4M10 10h4M10 13h4" stroke="#7fbd74"/><path d="M3 4l6 8M9 4l-6 8" stroke="#27832b" strokeWidth="2.200"/></g>,
        shield: <g><path d="M8 1c2 1 4 1.500 6 1.500C14 9 12 13 8 15 4 13 2 9 2 2.500 4 2.500 6 2 8 1z" fill="#f8cc24" stroke="#fff0b0"/><path d="M8 4v5M8 10.500v2" stroke="#222" strokeWidth="2"/></g>,
        wireless: <g><path d="M1 3h8v7H1zM2 12h7v2H2z" fill="#8fd0f8" stroke="#dff2ff"/><path d="M10.500 5c1 1 1 2 0 4M12.500 3c1.500 2 1.500 5 0 8M14.500 1.500c2 3 2 7 0 10" fill="none" stroke="#6fd83c" strokeWidth="1.200"/></g>,
        check: <g><rect x="1" y="1" width="14" height="14" rx="5" fill="#76c234"/><path d="M4.500 8l3 3 5-6" fill="none" stroke="#fff" strokeWidth="2"/></g>,
        signal: <g><path d="M.5.5h15v15H.5z" fill="#fff" stroke="#111"/><path d="M2 6l3 3V14H4V9zM2 12h2v2H2z" fill="#111"/><path d="M6 10h2v4H6zM9 6h2v8H9zM12 3h2v11h-2z" fill="#20b030" stroke="#0c6a18" strokeWidth=".5"/></g>,
        offline: <g><path d="M1 1h8v6H1zM6 5h8v6H6z" fill="#4a5fa8" stroke="#b4c0e0"/><path d="M7 8l8 7M15 8l-8 7" stroke="#d82020" strokeWidth="2"/></g>,
        bubble: <g><circle cx="9" cy="7" r="6" fill="#e6f0fa"/><path d="M2 9l6 6M8 9l-6 6" stroke="#8b94a2" strokeWidth="2"/></g>,
        swirl: <g><path d="M0 0h16v16H0z" fill="#e9f1fa"/><circle cx="8" cy="8" r="5.500" fill="#2c66b8"/><path d="M12 6c-4-3-7 1-5 4 2 2 5 1 5-1H9" fill="none" stroke="#fff" strokeWidth="1.600"/></g>,
        ball: <g><circle cx="8" cy="8" r="7" fill="#f4f4f4"/><path d="M5 2C2 3 0 7 2 11c1-1 2-3 2-5s0-3 1-4zM10 14c3-1 5-3 5-7-3 1-5 4-5 7z" fill="#444"/></g>,
        bluetooth: <g><rect x="2" y="0" width="12" height="16" rx="5" fill="#1c50c8"/><path d="M4.500 5l6.500 6-3 3V2l3 3-6.500 6" fill="none" stroke="#fff" strokeWidth="1.300"/></g>,
        mail: <g><path d="M1 3c3-2 11-2 14 0v7l-5 2-2 3-1-3-6-2z" fill="#fff" stroke="#c8b0b0"/><path d="M3 9V4l5 4 5-4v5" fill="none" stroke="#d63a30" strokeWidth="1.600"/></g>,
        phone: <g><circle cx="8" cy="8" r="7" fill="#1a2130" stroke="#d8e2f0"/><path d="M4.500 5l7 7" stroke="#dfe8f6" strokeWidth="2"/><path d="M4 7l3.500-3.500M9.500 13l3-3.500" stroke="#dfe8f6" strokeWidth="2.500"/></g>,
        drive: <g><rect x="2" y="4" width="12" height="9" rx="2" fill="#d6d6d2" stroke="#777"/><circle cx="6" cy="8" r="4" fill="#f2f2f2" stroke="#888"/><circle cx="6" cy="8" r="1.200" fill="#666"/><path d="M11 3v8" stroke="#777"/></g>,
        mcafee: <g><path d="M.5.5h15v15H.5z" fill="#c8102e" stroke="#fff"/><path d="M3.500 13V4L8 9l4.500-5v9" fill="none" stroke="#fff" strokeWidth="2.400"/></g>,
        lan: <g><path d="M4 1h8v6H4zM1 8h14v3H1z" fill="#222"/><path d="M0 13.500h16M3 11v3M13 11v3" stroke="#111" strokeWidth="2"/><path d="M6 3h4v2H6z" fill="#8aa"/></g>,
        red: <g><circle cx="8" cy="8" r="7.500" fill="#b81420"/><path d="M4 10l4-3 4 3M5 4l3 3 3-3" fill="none" stroke="#fff" strokeWidth="1.500"/></g>,
        none: <g/>,
        tool: <g><path d="M1 1h14v14H1z" fill="#f2f2f2" stroke="#333"/><path d="M3 2l6 4-6 4z" fill="#1fa33a"/><path d="M8 8h6v5H8zM3 12h12" fill="#ddd" stroke="#444"/></g>,
        speaker: <g><circle cx="7" cy="8" r="6" fill="#9a9fa8" stroke="#e2e2e2"/><circle cx="6" cy="8" r="2.500" fill="#444c58"/><path d="M12 12l3-3" stroke="#d6ecff" strokeWidth="1.500"/></g>,
        usb: <g><path d="M2 2l6-1 4 4-4 3z" fill="#4cae38" stroke="#27661c"/><path d="M5 8h8l2 3-3 4H5z" fill="#8c949e" stroke="#4b535d"/><path d="M6 10l3 3 4-4" fill="none" stroke="#44d02c" strokeWidth="1.500"/></g>,
        plug: <g><path d="M2 1l4 1-1 6 5 3 3-1 2 3-4 2-4-1-5-4z" fill="#e9e9e9" stroke="#444"/><path d="M11 11l4-1v4z" fill="#e8c83c"/></g>
    }
    const Small = ({name}) => <svg width="16" height="16" viewBox="0 0 16 16">{small[name]}</svg>

    const quickIcons = ["cmd", "folder", "desktop", "firefox", "ie", "orangeChat", "orange", "lock", "network", "note", "chrome"]
    const trayIcons = ["shield", "wireless", "check", "signal", "offline", "bubble", "swirl",
        "ball", "bluetooth", "mail", "phone", "drive", "mcafee", "lan",
        "red", "none", "tool", "speaker", "usb", "plug", "team"]
    const tasks = [
        {icon: "orange", name: "Gaurav Seth -..."},
        {icon: "chrome", name: "Google Ch...", count: 2},
        {icon: "ie", name: ":: HindustanTi..."},
        {icon: "pdf", name: "2.pdf - Adobe..."},
        {icon: "media", name: "Windows Medi..."},
        {icon: "folders", name: "Windows ...", count: 2},
        {icon: "skype", name: "Skype™ - mrg..."},
        {icon: "team", name: "TeamView...", count: 2},
        {icon: "note", name: "Untitled - Not..."},
        {icon: "talk", name: "Google Talk"},
        {icon: "excel", name: "Microsoft Exc...", on: true}
    ]

    const RibbonGroup = ({title, width, pad, launcher, children}) => (
        <Group $w={width}>
            <GroupBody $pad={pad}>{children}</GroupBody>
            <GroupTitle>
                <h2>{title}</h2>
                {launcher ? <IconButton aria-label={title + " options"}><Launcher/></IconButton> : null}
            </GroupTitle>
        </Group>
    )
    const Big = ({icon, width, lines}) => (
        <BigButton $w={width}>
            {icon}
            <LabelLine>{lines[0]}</LabelLine>
            <LabelLine>{lines[1]}<Arrow/></LabelLine>
        </BigButton>
    )
    const Combo = ({label, width, options}) => (
        <ComboBox $w={width}>
            <select aria-label={label}>
                {options.map(option => <option key={option}>{option}</option>)}
            </select>
            <Arrow/>
        </ComboBox>
    )
    // slanted edge between two sheet tabs
    const Slope = ({left, right}) => {
        const colors = {plain: "#c6d9f2", active: "#fffaf0", gold: "#ffd363"}
        return (
            <svg width="13" height="15" viewBox="0 0 13 15">
                <path d="M0 0h13L1 15H0z" fill={colors[left]}/>
                <path d="M13 0v15H1z" fill={colors[right]}/>
                <path d="M0 15l3-4v4z" fill="#6f8fc0"/>
                <path d="M1 15L13 0" stroke="#8b98b4"/><path d="M2.500 15L13 1.500" stroke="#fff"/>
            </svg>
        )
    }

export default function App () {
    const [formula, setFormula] = useState("Enter the patient name who is 4 years old and select approximate age drop down and select 10 leave the gender unknown/unspecified. Click Enter")
    const [cellName, setCellName] = useState("E170")
    const [activeTab, setActiveTab] = useState("Home")
    const [sheet, setSheet] = useState("Patient Attendance")
    const [zoom, setZoom] = useState(80)
    const kindOf = (item) => item.name === sheet ? "active" : item.kind || "gold"
    let rowNumber = 1
    return (
        <Desktop>
            <GlobalStyle/>
            <TitleBar>
                <OfficeButton aria-label="Office Button"><OfficeLogo/></OfficeButton>
                <QuickAccess>
                    <IconButton aria-label="Save"><Save/></IconButton>
                    <IconButton aria-label="Undo"><Undo/><Arrow/></IconButton>
                    <IconButton aria-label="Redo"><Undo flip color="#a3b8d8"/><Arrow color="#a3b8d8"/></IconButton>
                </QuickAccess>
                <CustomizeButton aria-label="Customize">
                    <svg width="7" height="7" viewBox="0 0 7 7"><path d="M0 1h7" stroke="#2d4570"/><path d="M0 3h7L3.500 7z" fill="#2d4570"/></svg>
                </CustomizeButton>
                <Title>MIU Test Specification v4.9.xls  [Compatibility Mode] - <span>Microsoft Excel</span></Title>
                <WindowButtons $gap={18} $right={4}>
                    <IconButton aria-label="Minimize"><Minimize/></IconButton>
                    <IconButton aria-label="Restore"><Restore/></IconButton>
                    <IconButton aria-label="Close"><Close/></IconButton>
                </WindowButtons>
            </TitleBar>
            <MenuTabs>
                {["Home", "Insert", "Page Layout", "Formulas", "Data", "Review", "View", "Add-Ins"].map(name => (
                    <MenuTab key={name} $active={name === activeTab} onClick={() => setActiveTab(name)}>{name}</MenuTab>
                ))}
                <Spacer/>
                <WindowButtons $gap={12} $right={6}>
                    <IconButton aria-label="Help"><Help/></IconButton>
                    <IconButton aria-label="Minimize workbook"><Minimize/></IconButton>
                    <IconButton aria-label="Restore workbook"><Restore/></IconButton>
                    <IconButton aria-label="Close workbook"><Close/></IconButton>
                </WindowButtons>
            </MenuTabs>
            <Ribbon>
                <RibbonGroup title="Clipboard" width={151} launcher>
                    <Big icon={<PasteIcon/>} width={44} lines={["Paste", ""]}/>
                    <SmallColumn>
                        <SmallButton><CutIcon/>Cut</SmallButton>
                        <SmallButton><CopyIcon/>Copy</SmallButton>
                        <SmallButton><PainterIcon/>Format Painter</SmallButton>
                    </SmallColumn>
                </RibbonGroup>
                <RibbonGroup title="Font" width={196} pad={3} launcher>
                    <ToolRows>
                        <ToolRow $gap={1}>
                            <Combo label="Font" width={96} options={["Arial", "Calibri", "Tahoma"]}/>
                            <Combo label="Font size" width={43} options={["11", "12", "14"]}/>
                            <SizeButtons>
                                <SetButton aria-label="Grow Font" $font='bold 16px "Liberation Serif"'>A<svg width="5" height="12" viewBox="0 0 5 12"><path d="M0 3h5L2.500 0z" fill="#456"/></svg></SetButton>
                                <SetButton aria-label="Shrink Font" $font='bold 13px "Liberation Serif"'>A<svg width="5" height="12" viewBox="0 0 5 12"><path d="M0 0h5L2.500 3z" fill="#456"/></svg></SetButton>
                            </SizeButtons>
                        </ToolRow>
                        <ToolRow>
                            <ButtonSet>
                                <SetButton $font='bold 14px "Liberation Serif"'>B</SetButton>
                                <SetButton $font='italic bold 14px "Liberation Serif"'>I</SetButton>
                                <SetButton $w={34} $font='bold 14px "Liberation Serif"' aria-label="Underline"><u>U</u><Arrow/></SetButton>
                            </ButtonSet>
                            <ButtonSet>
                                <SetButton $w={32} aria-label="Borders"><BorderIcon/><Arrow/></SetButton>
                            </ButtonSet>
                            <ButtonSet>
                                <SetButton $w={32} aria-label="Fill Color"><FillColor/><Arrow/></SetButton>
                                <SetButton $w={32} aria-label="Font Color"><FontColor/><Arrow/></SetButton>
                            </ButtonSet>
                        </ToolRow>
                    </ToolRows>
                </RibbonGroup>
                <RibbonGroup title="Alignment" width={251} pad={3} launcher>
                    <ToolRows>
                        <ToolRow>
                            <ButtonSet>
                                <SetButton $on aria-label="Top Align"><Lines rows={[[1, 2, 14], [3, 5, 10], [1, 8, 14]]}/></SetButton>
                                <SetButton $w={23} aria-label="Middle Align"><Lines rows={[[1, 4, 14], [3, 7, 10], [1, 10, 14]]}/></SetButton>
                                <SetButton $w={22} aria-label="Bottom Align"><Lines rows={[[1, 6, 14], [3, 9, 10], [1, 12, 14]]}/></SetButton>
                            </ButtonSet>
                            <ButtonSet>
                                <SetButton $w={30} aria-label="Orientation"><OrientIcon/><Arrow/></SetButton>
                            </ButtonSet>
                        </ToolRow>
                        <ToolRow>
                            <ButtonSet>
                                <SetButton aria-label="Align Left"><Lines rows={[[1, 1, 14], [1, 3, 9], [1, 5, 14], [1, 7, 9], [1, 9, 14], [1, 11, 9]]}/></SetButton>
                                <SetButton $w={23} aria-label="Center"><Lines rows={[[1, 1, 14], [3, 3, 10], [1, 5, 14], [3, 7, 10], [1, 9, 14], [3, 11, 10]]}/></SetButton>
                                <SetButton $w={22} aria-label="Align Right"><Lines rows={[[1, 1, 14], [6, 3, 9], [1, 5, 14], [6, 7, 9], [1, 9, 14], [6, 11, 9]]}/></SetButton>
                            </ButtonSet>
                            <ButtonSet>
                                <SetButton $w={22} aria-label="Decrease Indent"><Indent out/></SetButton>
                                <SetButton $w={22} aria-label="Increase Indent"><Indent/></SetButton>
                            </ButtonSet>
                        </ToolRow>
                    </ToolRows>
                    <Divider/>
                    <ToolRows>
                        <WrapButton $on><WrapIcon/>Wrap Text</WrapButton>
                        <WrapButton><MergeIcon/>Merge &amp; Center<Arrow/></WrapButton>
                    </ToolRows>
                </RibbonGroup>
                <RibbonGroup title="Number" width={136} pad={3} launcher>
                    <ToolRows>
                        <Combo label="Number format" width={128} options={["General", "Number", "Currency"]}/>
                        <ToolRow>
                            <ButtonSet>
                                <SetButton $w={32} aria-label="Accounting format"><MoneyIcon/><Arrow/></SetButton>
                                <SetButton $w={23} $font='13px "Open Sans"'>%</SetButton>
                                <SetButton $w={22} $font='bold 20px/8px "Liberation Serif"'>,</SetButton>
                            </ButtonSet>
                            <ButtonSet>
                                <SetButton $w={21} aria-label="Increase Decimal"><Decimals more/></SetButton>
                                <SetButton $w={22} aria-label="Decrease Decimal"><Decimals/></SetButton>
                            </ButtonSet>
                        </ToolRow>
                    </ToolRows>
                </RibbonGroup>
                <RibbonGroup title="Styles" width={174}>
                    <Big icon={<ConditionalIcon/>} width={72} lines={["Conditional", "Formatting"]}/>
                    <Big icon={<TableIcon/>} width={52} lines={["Format", "as Table"]}/>
                    <Big icon={<StylesIcon/>} width={46} lines={["Cell", "Styles"]}/>
                </RibbonGroup>
                <RibbonGroup title="Cells" width={134}>
                    <Big icon={<InsertIcon/>} width={44} lines={["Insert", ""]}/>
                    <Big icon={<DeleteIcon/>} width={40} lines={["Delete", ""]}/>
                    <Big icon={<FormatIcon/>} width={44} lines={["Format", ""]}/>
                </RibbonGroup>
                <RibbonGroup title="Editing" width={176}>
                    <SmallColumn $w={84}>
                        <SmallButton><SumIcon/>AutoSum<Arrow/></SmallButton>
                        <SmallButton><FillIcon/>Fill<Arrow/></SmallButton>
                        <SmallButton><EraserIcon/>Clear<Arrow/></SmallButton>
                    </SmallColumn>
                    <Big icon={<SortIcon/>} width={43} lines={["Sort &", "Filter"]}/>
                    <Big icon={<FindIcon/>} width={43} lines={["Find &", "Select"]}/>
                </RibbonGroup>
            </Ribbon>
            <FormulaBar>
                <NameBox>
                    <input aria-label="Name box" value={cellName} onChange={e => setCellName(e.target.value)}/>
                    <IconButton aria-label="Names"><svg width="7" height="4" viewBox="0 0 7 4"><path d="M0 0h7L3.500 4z"/></svg></IconButton>
                </NameBox>
                <FunctionArea><Knob/><FunctionButton aria-label="Insert Function">fx</FunctionButton></FunctionArea>
                <FormulaInput aria-label="Formula" value={formula} onChange={e => setFormula(e.target.value)}/>
                <ExpandButton aria-label="Expand formula bar">
                    <svg width="8" height="9" viewBox="0 0 8 9" fill="none" stroke="#000" strokeWidth="1.500"><path d="M1 1l3 3 3-3M1 5l3 3 3-3"/></svg>
                </ExpandButton>
            </FormulaBar>
            <SheetArea>
                <GridWindow>
                    <Grid>
                        <colgroup>
                            <col width="23"/>
                            {columns.map(column => <col key={column.name} width={column.width}/>)}
                        </colgroup>
                        <thead>
                            <tr>
                                <Corner/>
                                {columns.map(column => <ColumnHead key={column.name} $on={column.name === "E"}>{column.name}</ColumnHead>)}
                            </tr>
                        </thead>
                        <tbody>
                            <GridRow $h={32}>
                                <RowHead>1</RowHead>
                                {titles.map(title => <TitleCell key={title}>{title}</TitleCell>)}
                                <EmptyCell colSpan={2}/>
                            </GridRow>
                            {tests.map(test => test.steps.map((item, index) => {
                                rowNumber++
                                return <GridRow key={test.condition + index} $h={item.h}>
                                    <RowHead>{rowNumber}</RowHead>
                                    {index === 0 ? <>
                                        <Cell rowSpan={test.steps.length}>{test.area}</Cell>
                                        <Cell rowSpan={test.steps.length}>{test.condition}</Cell>
                                        <Cell rowSpan={test.steps.length}>{test.detail}</Cell>
                                    </> : null}
                                    <Cell $right>{index + 1}</Cell>
                                    <Cell $yellow={item.yellow}>{item.step}</Cell>
                                    <Cell $yellow={item.yellow}>{item.result}</Cell>
                                    <Cell>{item.author}</Cell>
                                    <Cell/>
                                    <Cell>CL</Cell>
                                    <EmptyCell colSpan={2}/>
                                </GridRow>
                            }))}
                        </tbody>
                    </Grid>
                </GridWindow>
                <VerticalScroll>
                    <SplitBox/>
                    <ScrollButton aria-label="Scroll up"><svg width="9" height="5" viewBox="0 0 9 5"><path d="M0 5h9L4.500 0z" fill="#3d5a8c"/></svg></ScrollButton>
                    <VerticalThumb aria-label="Vertical scroll"><svg width="8" height="8" viewBox="0 0 8 8"><path d="M0 .5h8M0 2.500h8M0 4.500h8M0 6.500h8" stroke="#6b7c98"/></svg></VerticalThumb>
                    <Spacer/>
                    <ScrollButton aria-label="Scroll down"><svg width="9" height="5" viewBox="0 0 9 5"><path d="M0 0h9L4.500 5z" fill="#3d5a8c"/></svg></ScrollButton>
                </VerticalScroll>
            </SheetArea>
            <SheetTabs>
                <TabArrows>
                    {["M1 0v7M7 0v7L2.500 3.500z", "M6 0v7L1.500 3.500z", "M2 0v7l4.500-3.500z", "M1 0v7l4.500-3.500zM7 0v7"].map((d, i) => (
                        <IconButton key={d} aria-label={["First sheet", "Previous sheet", "Next sheet", "Last sheet"][i]}>
                            <svg width="7" height="7" viewBox="0 0 8 7"><path d={d} fill="#1d3f7c" stroke="#1d3f7c"/></svg>
                        </IconButton>
                    ))}
                </TabArrows>
                <TabList>
                    {sheets.map((item, index) => <React.Fragment key={item.name}>
                        {index > 0 ? <Slope left={kindOf(sheets[index - 1])} right={kindOf(item)}/> : null}
                        <SheetTab $w={item.width} $kind={kindOf(item)} onClick={() => setSheet(item.name)}>{item.name}</SheetTab>
                    </React.Fragment>)}
                </TabList>
                <SideScroll>
                    <SplitHandle/>
                    <SideButton aria-label="Scroll left"><svg width="5" height="8" viewBox="0 0 5 8"><path d="M5 0v8L0 4z" fill="#2f4e84"/></svg></SideButton>
                    <SideThumb aria-label="Horizontal scroll"><svg width="8" height="8" viewBox="0 0 8 8"><path d="M.5 0v8M2.500 0v8M4.500 0v8M6.500 0v8" stroke="#8090ab"/></svg></SideThumb>
                    <Spacer/>
                    <SideButton aria-label="Scroll right"><svg width="5" height="8" viewBox="0 0 5 8"><path d="M0 0v8l5-4z" fill="#2f4e84"/></svg></SideButton>
                    <SplitHandle/>
                </SideScroll>
            </SheetTabs>
            <StatusBar>
                <StatusText>Ready</StatusText>
                <Spacer/>
                <StatusTools>
                    <ViewButtons>
                        <SetButton $w={18} $on aria-label="Normal view"><svg width="13" height="11" viewBox="0 0 13 11"><path d="M.5.5h12v10H.5zM.5 3.500h12M.5 7h12M4.500.5v10M8.500.5v10" fill="#fff" stroke="#6a7488"/></svg></SetButton>
                        <SetButton $w={19} aria-label="Page layout view"><svg width="13" height="12" viewBox="0 0 13 12"><path d="M.5.5h12v11H.5z" fill="#c9d3e2" stroke="#6a7488"/><path d="M3.500 2.500h6v7h-6zM5 5h3M5 7h3" fill="#fff" stroke="#6a7488"/></svg></SetButton>
                        <SetButton $w={18} aria-label="Page break view"><svg width="13" height="12" viewBox="0 0 13 12"><path d="M.5.5h12v11H.5zM4.500.5v6h4v-6" fill="#fff" stroke="#6a7488"/></svg></SetButton>
                    </ViewButtons>
                    <span>{zoom}%</span>
                    <Spacer/>
                    <ZoomControl>
                        <svg width="17" height="17" viewBox="0 0 17 17"><circle cx="8.500" cy="8.500" r="7" fill="#e6eefa" stroke="#5571a3"/><path d="M5 8.500h7" stroke="#3c5480" strokeWidth="2"/></svg>
                        <input type="range" min="10" max="200" value={zoom} aria-label="Zoom" onChange={e => setZoom(e.target.value)}/>
                        <svg width="17" height="17" viewBox="0 0 17 17"><circle cx="8.500" cy="8.500" r="7" fill="#e6eefa" stroke="#5571a3"/><path d="M4.500 8.500h8M8.500 4.500v8" stroke="#3c5480" strokeWidth="2"/></svg>
                    </ZoomControl>
                </StatusTools>
            </StatusBar>
            <TaskBar>
                <StartButton>
                    <svg width="20" height="20" viewBox="0 0 20 20">
                        <path d="M3 3c2-1.500 4-1.500 6 0L7.500 9c-2-1.200-4-1.200-6 0z" fill="#f0582a"/><path d="M10.500 3.500c2 1.300 4.500 1.300 7 0L16 9.500c-2.200 1.300-4.500 1.300-7 0z" fill="#8cc63c"/>
                        <path d="M1.200 10.500c2-1.300 4-1.300 6 0l-1.500 6c-2-1.300-4-1.300-6 0z" fill="#4a8ae8"/><path d="M8.700 11c2.200 1.300 4.500 1.300 7 0l-1.500 6c-2.400 1.300-4.800 1.300-7 0z" fill="#fbc92e"/>
                    </svg>
                    start
                </StartButton>
                <Grip $left={8} $right={1}/>
                <QuickLaunch>
                    {quickIcons.map(name => <IconButton key={name} aria-label={name}><Small name={name}/></IconButton>)}
                </QuickLaunch>
                <Grip $left={6} $right={5}/>
                <TaskGrid>
                    {tasks.map(task => (
                        <TaskButton key={task.name} $on={task.on}>
                            <Small name={task.icon}/>
                            {task.count ? <b>{task.count}</b> : null}
                            <TaskName>{task.name}</TaskName>
                            {task.count ? <Arrow color="#fff"/> : null}
                        </TaskButton>
                    ))}
                </TaskGrid>
                <Grip $left={8} $right={0}/>
                <Language>EN</Language>
                <Tray>
                    <TrayIcons>
                        {trayIcons.map(name => <Small key={name} name={name}/>)}
                    </TrayIcons>
                    <Clock>{"17:19\nSunday\n06/02/2011"}</Clock>
                </Tray>
            </TaskBar>
        </Desktop>
    )
}
